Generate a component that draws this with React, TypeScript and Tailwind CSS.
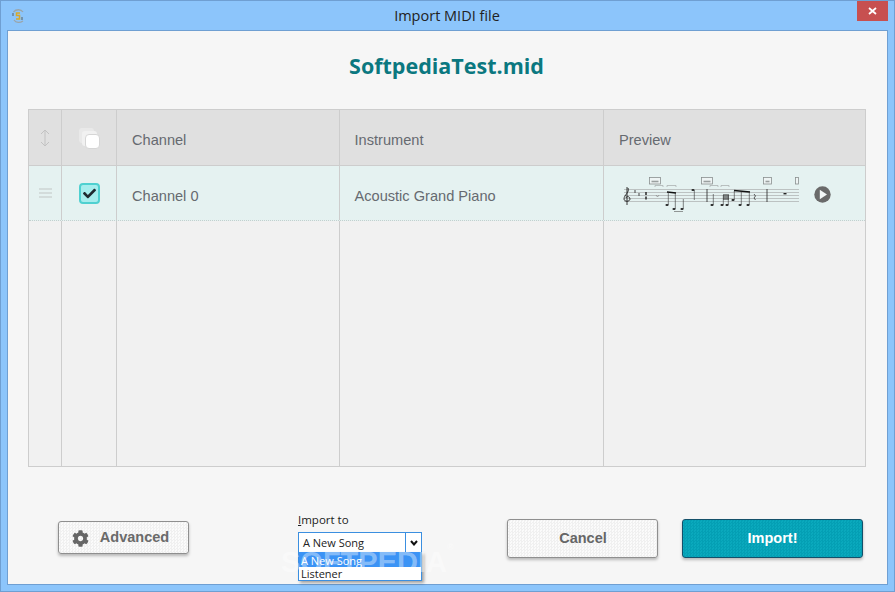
import React from 'react';
import { FaCheck, FaCog } from 'react-icons/fa';

function AppLogo() {
  return (
    <svg width="16" height="16" viewBox="0 0 16 16" fill="none">
      <path d="M13 4C11 1 6 1 3.5 4M4 12c2 3 6 3 9 1" stroke="#9aa5aa" strokeWidth="1.3" />
      <path d="M10 5H6.5v2.5H9.5V11H6" stroke="#d9a928" strokeWidth="1.5" />
      <path d="M3 5v3M12 9v3" stroke="#5d6a70" strokeWidth="1.1" />
    </svg>
  );
}

function Note({ x, y, stem }: { x: number; y: number; stem: number }) {
  return (
    <g>
      <ellipse cx={x} cy={y} rx="1.6" ry="1" fill="#222" />
      <line x1={x + 1.3} y1={y} x2={x + 1.3} y2={stem} stroke="#333" strokeWidth="0.6" />
    </g>
  );
}

function ScorePreview() {
  const staff = [17.5, 20.5, 23.5, 26.5, 29.5];
  const boxes = [
    [29.5, 5.5, 11, 6.5],
    [81.5, 5.5, 11, 6.5],
    [143.5, 5.5, 8, 6.5],
    [175.5, 5.5, 3, 6.5],
  ];
  const brackets = [
    [35, 43],
    [47, 56],
    [90, 98],
    [101, 109],
  ];
  return (
    <svg width="182" height="44" viewBox="0 0 182 44" fill="none">
      {staff.map((y) => (
        <line key={y} x1="4" y1={y} x2="179" y2={y} stroke="#bcc2c2" strokeWidth="1" />
      ))}
      {boxes.map(([x, y, w, h]) => (
        <g key={x}>
          <rect x={x} y={y} width={w} height={h} stroke="#8a8f8f" strokeWidth="0.8" fill="#eef4f4" />
          {w > 3 && <line x1={x + 2} y1={y + 4} x2={x + w - 2} y2={y + 4} stroke="#9a9f9f" strokeWidth="1.6" />}
        </g>
      ))}
      {brackets.map(([a, b]) => (
        <path key={a} d={`M${a} 15V13.5H${b}V15`} stroke="#a5a9a9" strokeWidth="0.7" />
      ))}
      {/* clef, key and time */}
      <path d="M8 16c2 4-4 7-4 11 0 3 6 3 6 0s-4-3-4-1M7 15v18" stroke="#222" strokeWidth="0.9" />
      <path d="M15 18v3M19 21v3" stroke="#555" strokeWidth="1.1" />
      <path d="M26 20v3M26 24.5v3" stroke="#333" strokeWidth="1.6" />
      <path d="M36 23l1.5 2 1.5-2" stroke="#888" strokeWidth="0.7" />
      {/* first beam group */}
      <path d="M47 20L56 21" stroke="#111" strokeWidth="1.5" />
      <Note x={47} y={33} stem={20} />
      <Note x={54} y={37} stem={21} />
      <Note x={62} y={37} stem={27} />
      <path d="M54 39.5h9" stroke="#555" strokeWidth="0.6" />
      <Note x={73} y={18} stem={28} />
      <line x1="87" y1="17" x2="87" y2="30" stroke="#222" strokeWidth="0.8" />
      {/* second group */}
      <Note x={92} y={33} stem={22} />
      <Note x={102} y={33} stem={23} />
      <Note x={107} y={33} stem={23} />
      <path d="M103 23h6M103 25h6M103 27h6" stroke="#222" strokeWidth="1.1" />
      <Note x={113} y={28} stem={19} />
      <path d="M114 18.5L130 20" stroke="#111" strokeWidth="1.4" />
      <Note x={120} y={33} stem={19.5} />
      <Note x={128} y={33} stem={20} />
      <path d="M134 22l1.5 2-1.5 2 1.5 2" stroke="#333" strokeWidth="0.8" />
      <line x1="147" y1="17" x2="147" y2="30" stroke="#222" strokeWidth="0.8" />
      <rect x="163.5" y="21" width="3" height="1.4" fill="#222" />
    </svg>
  );
}

function PlayButton() {
  return (
    <svg width="17" height="17" viewBox="0 0 17 17">
      <circle cx="8.5" cy="8.5" r="8.2" fill="#6a6a6a" />
      <path d="M5.8 3.8L13 8.5L5.8 13.2Z" fill="#f4f8f8" />
    </svg>
  );
}

const buttonBase =
  'flex items-center justify-center rounded-[3px] font-bold text-[14.5px] font-["Liberation_Sans",Arial,sans-serif] bg-[length:3px_3px]';

export default function App() {
  return (
    <div className='w-[895px] h-[592px] flex flex-col border border-[#6f9fd2] bg-[#8cc5fb] overflow-hidden font-["Liberation_Sans",Arial,sans-serif]'>
      {/* Title bar */}
      <div className="h-[29px] flex items-center shrink-0 relative">
        <div className="ml-[9px] w-[16px] h-[16px]">
          <AppLogo />
        </div>
        <div className='flex-1 text-center pl-[11px] text-[14.5px] text-[#222] font-["Open_Sans",sans-serif]'>
          Import MIDI file
        </div>
        <div className="w-[31px] h-[20px] mr-[6px] -mt-[9px] bg-[#c75050] flex items-center justify-center">
          <svg width="9" height="8" viewBox="0 0 9 8">
            <path d="M1 1L8 7M8 1L1 7" stroke="#fff" strokeWidth="1.8" />
          </svg>
        </div>
      </div>

      {/* Client area */}
      <div className="mx-[6px] h-[555px] border border-[#6f9fd2] bg-[#f6f6f6] flex flex-col relative">
        <h1 className='h-[78px] shrink-0 flex items-center justify-center pb-[7px] pr-[2px] text-[21.5px] font-bold text-[#0b7880] font-["Open_Sans",sans-serif]'>
          SoftpediaTest.mid
        </h1>

        {/* Channel table */}
        <div className="ml-[20px] mr-[21px] h-[358px] border border-[#cdcdcd] bg-[#f1f1f1] flex flex-col text-[14.6px] text-[#666a70]">
          <div className="h-[56px] shrink-0 grid grid-cols-[33px_55px_223px_264px_1fr] bg-[#e0e0e0] border-b border-[#cdcdcd]">
            <div className="border-r border-[#cdcdcd] flex justify-center pt-[19px]">
              <svg width="10" height="18" viewBox="0 0 10 18" fill="none" stroke="#c2c2c2" strokeWidth="1">
                <path d="M5 1V17M1 5L5 1L9 5M1 13L5 17L9 13" />
              </svg>
            </div>
            <div className="border-r border-[#cdcdcd] relative">
              <div className="absolute left-[17px] top-[18px] w-[15px] h-[15px] rounded-[3px] bg-[#e9e9e9]" />
              <div className="absolute left-[20px] top-[21px] w-[15px] h-[15px] rounded-[3px] bg-[#f1f1f1]" />
              <div className="absolute left-[23px] top-[24px] w-[15px] h-[15px] rounded-[4px] bg-white border border-[#d6d6d6]" />
            </div>
            <div className="border-r border-[#cdcdcd] flex items-center pl-[15px] pt-[7px]">Channel</div>
            <div className="border-r border-[#cdcdcd] flex items-center pl-[14.5px] pt-[7px]">Instrument</div>
            <div className="flex items-center pl-[15px] pt-[7px]">Preview</div>
          </div>

          <div className="h-[55px] shrink-0 grid grid-cols-[33px_55px_223px_264px_1fr] bg-[#e5f2f1] border-b border-dotted border-[#c4cfce]">
            <div className="border-r border-[#cdcdcd] flex flex-col items-center gap-[2px] pt-[22px]">
              <div className="w-[13px] h-[2px] bg-[#d3dcdb]" />
              <div className="w-[13px] h-[2px] bg-[#d3dcdb]" />
              <div className="w-[13px] h-[2px] bg-[#d3dcdb]" />
            </div>
            <div className="border-r border-[#cdcdcd] flex justify-center pt-[17px] pl-[1px]">
              <div className="w-[21px] h-[21px] rounded-[4px] border-2 border-[#4fd0d0] bg-[#a6eded] flex items-center justify-center text-[#1f2a30] text-[13px]">
                <FaCheck />
              </div>
            </div>
            <div className="border-r border-[#cdcdcd] flex items-center pl-[15px] pt-[7px]">Channel 0</div>
            <div className="border-r border-[#cdcdcd] flex items-center pl-[14.5px] pt-[7px]">Acoustic Grand Piano</div>
            <div className="flex items-center pl-[16px] gap-[12px] pt-[2px]">
              <ScorePreview />
              <PlayButton />
            </div>
          </div>

          <div className="flex-1 grid grid-cols-[33px_55px_223px_264px_1fr]">
            <div className="border-r border-[#cdcdcd]" />
            <div className="border-r border-[#cdcdcd]" />
            <div className="border-r border-[#cdcdcd]" />
            <div className="border-r border-[#cdcdcd]" />
            <div />
          </div>
        </div>

        {/* Footer */}
        <div className="flex items-start pl-[50px] pt-[52px]">
          <button className={`${buttonBase} mt-[2px] w-[131px] h-[33px] gap-[11px] pr-[6px] pt-[1px] text-[#6a6a6a] border border-[#8f8f8f] shadow-[0_2px_3px_rgba(0,0,0,0.25)] bg-[repeating-conic-gradient(#f0f0f0_0_25%,#fbfbfb_0_50%)]`}>
            <FaCog className="text-[17px] text-[#666]" />
            Advanced
          </button>
          <div className="ml-[109px] -mt-[7px] w-[124px] relative text-[#222]">
            <div className='text-[11.5px] h-[16px] leading-[16px] font-["Open_Sans",sans-serif]'>
              <span className="underline">I</span>mport to
            </div>
            <div className='mt-[4px] h-[21px] border border-[#3b8fe0] bg-white flex text-[11px] font-["Open_Sans",sans-serif]'>
              <div className="flex-1 pl-[4px] leading-[19px]">A New Song</div>
              <div className="w-[16px] border-l border-[#3b8fe0] flex items-center justify-center">
                <svg width="8" height="6" viewBox="0 0 8 6" fill="none" stroke="#111" strokeWidth="2">
                  <path d="M1 1L4 4.5L7 1" />
                </svg>
              </div>
            </div>
            {/* Open dropdown list */}
            <div className='absolute left-0 top-[40px] w-[124px] h-[29px] border border-[#3b8fe0] border-t-0 bg-white text-[11px] leading-[13px] shadow-[2px_2px_3px_rgba(0,0,0,0.35)] font-["Open_Sans",sans-serif] z-10'>
              <div className="h-[15px] bg-[#3b93f5] text-white pl-[2px] leading-[17px]">A New Song</div>
              <div className="pl-[2px]">Listener</div>
            </div>
          </div>
          <button className={`${buttonBase} ml-[85px] w-[151px] h-[39px] pl-[1px] text-[#666] border border-[#8f8f8f] shadow-[0_2px_3px_rgba(0,0,0,0.25)] bg-[repeating-conic-gradient(#f0f0f0_0_25%,#fbfbfb_0_50%)]`}>
            Cancel
          </button>
          <button className={`${buttonBase} ml-[24px] w-[181px] h-[39px] text-white border border-[#14506a] shadow-[0_2px_3px_rgba(0,0,0,0.25)] bg-[repeating-conic-gradient(#049fb4_0_25%,#0aa9bd_0_50%)]`}>
            Import!
          </button>
        </div>

        {/* Watermark */}
        <div className="absolute left-[273px] top-[510px] text-[29px] font-bold text-white/40 pointer-events-none z-20">
          SOFTPEDIA<span className="text-[9px] align-top">®</span>
        </div>
      </div>
    </div>
  );
}
